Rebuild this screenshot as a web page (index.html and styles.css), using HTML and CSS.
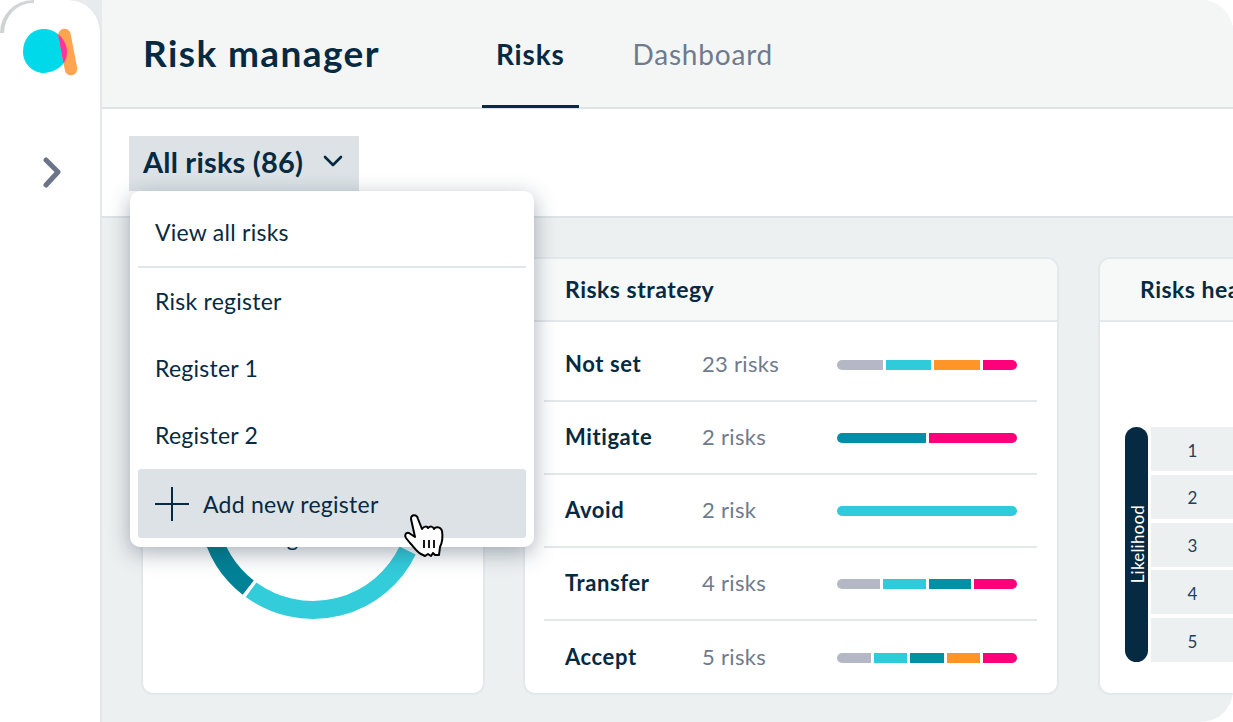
FILE: index.html
```html
<!DOCTYPE html>
<html lang="en">
<head>
<meta charset="utf-8">
<title>Risk manager</title>
<link rel="stylesheet" href="styles.css">
</head>
<body>
<div class="app">
  <div class="rail">
    <aside class="sidebar">
      <svg class="logo" width="60" height="50" viewBox="0 0 60 50">
        <defs><clipPath id="blob"><path d="M22 2C35 1 47 12 47 25C47 38 36 45 24 46C12 46 3 36 3 25C3 12 11 3 22 2Z"/></clipPath></defs>
        <path d="M22 2C35 1 47 12 47 25C47 38 36 45 24 46C12 46 3 36 3 25C3 12 11 3 22 2Z" fill="#00d9e9"/>
        <path d="M44.5 8L51 42" stroke="#ffa552" stroke-width="12.5" stroke-linecap="round" fill="none"/>
        <path d="M44.5 8L51 42" stroke="#ff359c" stroke-width="12.5" stroke-linecap="round" fill="none" clip-path="url(#blob)"/>
      </svg>
      <svg class="chevron" width="20" height="32" viewBox="0 0 20 32">
        <path d="M4 3L16 15L4 28" stroke="#6b7488" stroke-width="5" stroke-linecap="round" stroke-linejoin="round" fill="none"/>
      </svg>
    </aside>
  </div>
  <main class="main">
    <header class="topbar">
      <h1 class="title">Risk manager</h1>
      <nav class="tabs">
        <a class="tab tab-active">Risks</a>
        <a class="tab">Dashboard</a>
      </nav>
    </header>
    <div class="toolbar">
      <button class="filter">
        <span>All risks (86)</span>
        <svg width="20" height="12" viewBox="0 0 20 12"><path d="M2 2L10 10L18 2" stroke="#062a42" stroke-width="2.6" stroke-linecap="round" stroke-linejoin="round" fill="none"/></svg>
      </button>
    </div>
    <div class="content">
      <section class="card card-donut">
        <div class="card-head"></div>
        <div class="donut">
          <span class="donut-label">Registered</span>
          <svg width="250" height="250" viewBox="0 0 250 250">
            <path d="M22 145A105 105 0 0 0 60.2 207.6" stroke="#008296" stroke-width="18" fill="none"/>
            <path d="M63.1 209.8A105 105 0 0 0 219.6 170.5" stroke="#33ccdb" stroke-width="18" fill="none"/>
          </svg>
        </div>
      </section>
      <section class="card card-strategy">
        <h2 class="card-head">Risks strategy</h2>
        <ul class="rows">
          <li class="row"><b class="row-name">Not set</b><span class="row-count">23 risks</span>
            <div class="bar"><i class="seg grey" style="flex-grow:45"></i><i class="seg cyan" style="flex-grow:45"></i><i class="seg orange" style="flex-grow:45"></i><i class="seg pink" style="flex-grow:34"></i></div></li>
          <li class="row"><b class="row-name">Mitigate</b><span class="row-count">2 risks</span>
            <div class="bar"><i class="seg teal" style="flex-grow:1"></i><i class="seg pink" style="flex-grow:1"></i></div></li>
          <li class="row"><b class="row-name">Avoid</b><span class="row-count">2 risk</span>
            <div class="bar"><i class="seg cyan" style="flex-grow:1"></i></div></li>
          <li class="row"><b class="row-name">Transfer</b><span class="row-count">4 risks</span>
            <div class="bar"><i class="seg grey" style="flex-grow:1"></i><i class="seg cyan" style="flex-grow:1"></i><i class="seg teal" style="flex-grow:1"></i><i class="seg pink" style="flex-grow:1"></i></div></li>
          <li class="row"><b class="row-name">Accept</b><span class="row-count">5 risks</span>
            <div class="bar"><i class="seg grey" style="flex-grow:1"></i><i class="seg cyan" style="flex-grow:1"></i><i class="seg teal" style="flex-grow:1"></i><i class="seg orange" style="flex-grow:1"></i><i class="seg pink" style="flex-grow:1"></i></div></li>
        </ul>
      </section>
      <section class="card card-heat">
        <h2 class="card-head">Risks heatmap</h2>
        <div class="heat">
          <div class="axis"><span>Likelihood</span></div>
          <div class="cells">
            <div class="cell">1</div>
            <div class="cell">2</div>
            <div class="cell">3</div>
            <div class="cell">4</div>
            <div class="cell">5</div>
          </div>
        </div>
      </section>
    </div>
  </main>
  <div class="menu">
    <div class="menu-item">View all risks</div>
    <div class="menu-rule"></div>
    <div class="menu-item">Risk register</div>
    <div class="menu-item">Register 1</div>
    <div class="menu-item">Register 2</div>
    <div class="menu-add">
      <svg width="34" height="34" viewBox="0 0 34 34"><path d="M17 0V34M0 17H34" stroke="#062a42" stroke-width="2" fill="none"/></svg>
      <span>Add new register</span>
    </div>
  </div>
  <svg class="hand" width="60" height="60" viewBox="0 0 60 60">
    <path d="M16 14C16 9 22 9 23 14L27 24C29 21 32 21 33 23C35 21 38 21 39 24C41 21 46 22 47 26C48 32 47 38 45 42L44 50H40L38 48L36 51L33 49L30 51L26 49C22 47 19 42 15 38L11 33C9 30 11 27 14 28L20 32Z" fill="#fff" stroke="#000" stroke-width="2" stroke-linejoin="round"/>
    <path d="M29 35V43M34 35V43M39 35V43" stroke="#000" stroke-width="1.8" fill="none"/>
  </svg>
</div>
</body>
</html>
```
FILE: styles.css
```css
* { box-sizing: border-box; }
html, body { margin: 0; padding: 0; background: #fff; }
body { font-family: "Lato", "Noto Sans", sans-serif; color: #062a42; }
.app { position: relative; display: flex; width: 1233px; height: 722px; overflow: hidden; }

.rail { flex: 0 0 102px; background: linear-gradient(to right, #fff 50%, #e8ebee 50%); }
.sidebar { position: relative; display: flex; flex-direction: column; height: 100%; padding: 27px 0 0 20px; background: #fff; border-right: 2px solid #e3e7ea; border-radius: 33px 33px 0 0; }
.sidebar::before { content: ""; position: absolute; left: 0; top: 0; width: 30px; height: 30px; border-top: 3px solid #d2d5d6; border-left: 4px solid #cfd2d3; border-top-left-radius: 33px; }
.logo { display: block; }
.chevron { display: block; margin: 80px 0 0 22px; }

.main { flex: 1; display: flex; flex-direction: column; min-width: 0; border-radius: 0 32px 32px 0; overflow: hidden; background: #edf0f1; }
.topbar { display: flex; align-items: flex-start; height: 109px; padding-left: 41px; background: #f4f6f6; border-bottom: 2px solid #dde3e6; flex: none; }
.title { margin: 0; align-self: center; padding-bottom: 2px; font-size: 37px; font-weight: 700; line-height: 1; width: 339px; letter-spacing: 1.4px; }
.tabs { display: flex; gap: 40px; }
.tab { display: flex; align-items: center; height: 108px; padding: 2px 14px 0; font-size: 28px; color: #6f7a8c; letter-spacing: .8px; border-bottom: 3px solid transparent; }
.tab-active { color: #062a42; font-weight: 700; border-bottom-color: #062a42; }

.toolbar { height: 109px; padding: 27px 0 0 27px; background: #fff; border-bottom: 2px solid #dde3e6; flex: none; }
.filter { display: flex; align-items: center; gap: 20px; width: 230px; height: 55px; padding: 0 0 5px 14px; border: 0; background: #dce2e6; font: 700 29px "Lato", sans-serif; letter-spacing: .2px; color: #062a42; }

.content { flex: 1; display: flex; gap: 38px; padding: 39px 0 0 39px; min-height: 0; }
.card { flex: none; height: 438px; background: #fff; border: 2px solid #e3e8eb; border-radius: 12px; overflow: hidden; }
.card-donut { width: 344px; }
.card-strategy { width: 536px; }
.card-heat { width: 300px; margin-left: 1px; }
.card-head { margin: 0; height: 63px; padding: 0 0 2px 40px; display: flex; align-items: center; font-size: 23px; font-weight: 700; letter-spacing: .5px; background: #f7f9f9; border-bottom: 2px solid #e3e8eb; white-space: nowrap; }

.donut { position: relative; width: 250px; margin: 58px 0 0 45px; }
.donut svg { display: block; }
.donut-label { position: absolute; left: 0; right: 0; top: 146px; text-align: center; font-size: 22px; line-height: 24px; color: #062a42; }

.rows { list-style: none; margin: 0; padding: 7px 20px 0 19px; }
.row { display: flex; align-items: center; height: 73px; padding: 0 0 2px 21px; border-bottom: 2px solid #e3e8eb; }
.row:last-child { border-bottom: 0; }
.row-name { width: 137px; font-size: 22px; font-weight: 700; letter-spacing: .6px; }
.row-count { width: 135px; font-size: 22px; color: #6f7a8c; letter-spacing: .3px; }
.bar { display: flex; gap: 3px; width: 180px; height: 10px; margin-top: 2px; border-radius: 5px; overflow: hidden; }
.seg { display: block; flex-basis: 0; height: 100%; }
.grey { background: #b3b8c4; }
.cyan { background: #2fcbdb; }
.teal { background: #0090a6; }
.orange { background: #ff9429; }
.pink { background: #ff007a; }

.heat { display: flex; gap: 3px; margin: 105px 0 0 25px; }
.axis { display: flex; align-items: center; justify-content: center; width: 23px; height: 235px; border-radius: 12px; background: #062a42; color: #fff; font-size: 17px; letter-spacing: .2px; }
.axis span { writing-mode: vertical-rl; transform: rotate(180deg); position: relative; left: 1px; }
.cells { display: flex; flex-direction: column; justify-content: space-between; width: 83px; height: 235px; }
.cell { display: flex; align-items: center; justify-content: center; height: 44px; padding-top: 2px; background: #edf0f1; font-size: 17px; color: #23405a; }

.menu { position: absolute; left: 130px; top: 191px; width: 404px; height: 356px; padding: 8px; background: #fff; border-radius: 10px; box-shadow: 0 6px 22px rgba(30, 50, 70, .38); font-size: 23px; letter-spacing: .25px; }
.menu-item { display: flex; align-items: center; height: 67px; padding: 0 0 2px 17px; }
.menu-rule { height: 2px; background: #e0e6ea; }
.menu-add { display: flex; align-items: center; gap: 14px; height: 69px; padding-left: 17px; background: #dce2e6; border-radius: 3px; }
.hand { position: absolute; left: 395px; top: 505px; }
```
